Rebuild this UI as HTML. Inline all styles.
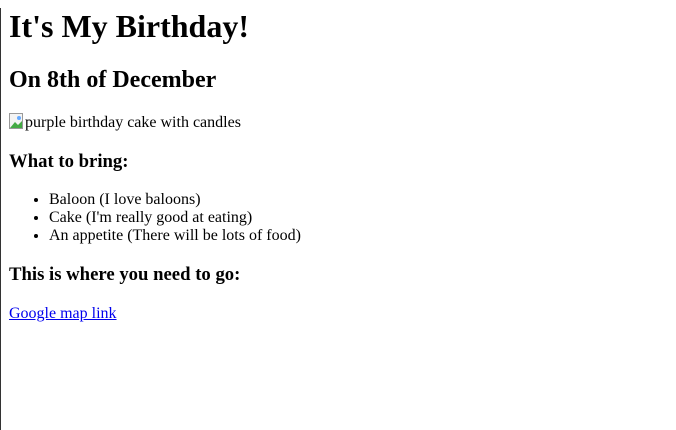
<!DOCTYPE html>
<html><head><style>
html,body{margin:0;padding:0;background:#fff}
body{margin:0 8px 0 9px;font-family:"Liberation Serif",serif;font-size:16px;color:#000;position:relative;height:422px;overflow:hidden}
.ln{position:absolute;left:-9px;top:0;width:1px;height:422px;background:#333}
h1{font-size:32px;margin:8px 0 21px;line-height:37px}
h2{font-size:24px;margin:0 0 20px;line-height:28px}
h3{font-size:18.72px;margin:0;line-height:22px}
p{margin:0}
ul{margin:18px 0 19px;padding-left:40px}
li{line-height:18px}
a{color:#00e}
</style></head><body><div class="ln"></div>
<h1>It's My Birthday!</h1>
<h2>On 8th of December</h2>
<p style="margin-bottom:18px;line-height:18px;position:relative;top:-1px"><svg width="16" height="16" style="vertical-align:-2px"><rect x="0.5" y="0.5" width="13" height="15" fill="#f4f4f4" stroke="#999"/><path d="M1 15 L6 9 L9 12 L13 8 V15Z" fill="#4a4"/><circle cx="10" cy="5" r="2" fill="#6af"/></svg>purple birthday cake with candles</p>
<h3>What to bring:</h3>
<ul><li>Baloon (I love baloons)</li><li>Cake (I'm really good at eating)</li><li>An appetite (There will be lots of food)</li></ul>
<h3 style="margin-bottom:19px">This is where you need to go:</h3>
<p><a href="#">Google map link</a></p>
</body></html>
